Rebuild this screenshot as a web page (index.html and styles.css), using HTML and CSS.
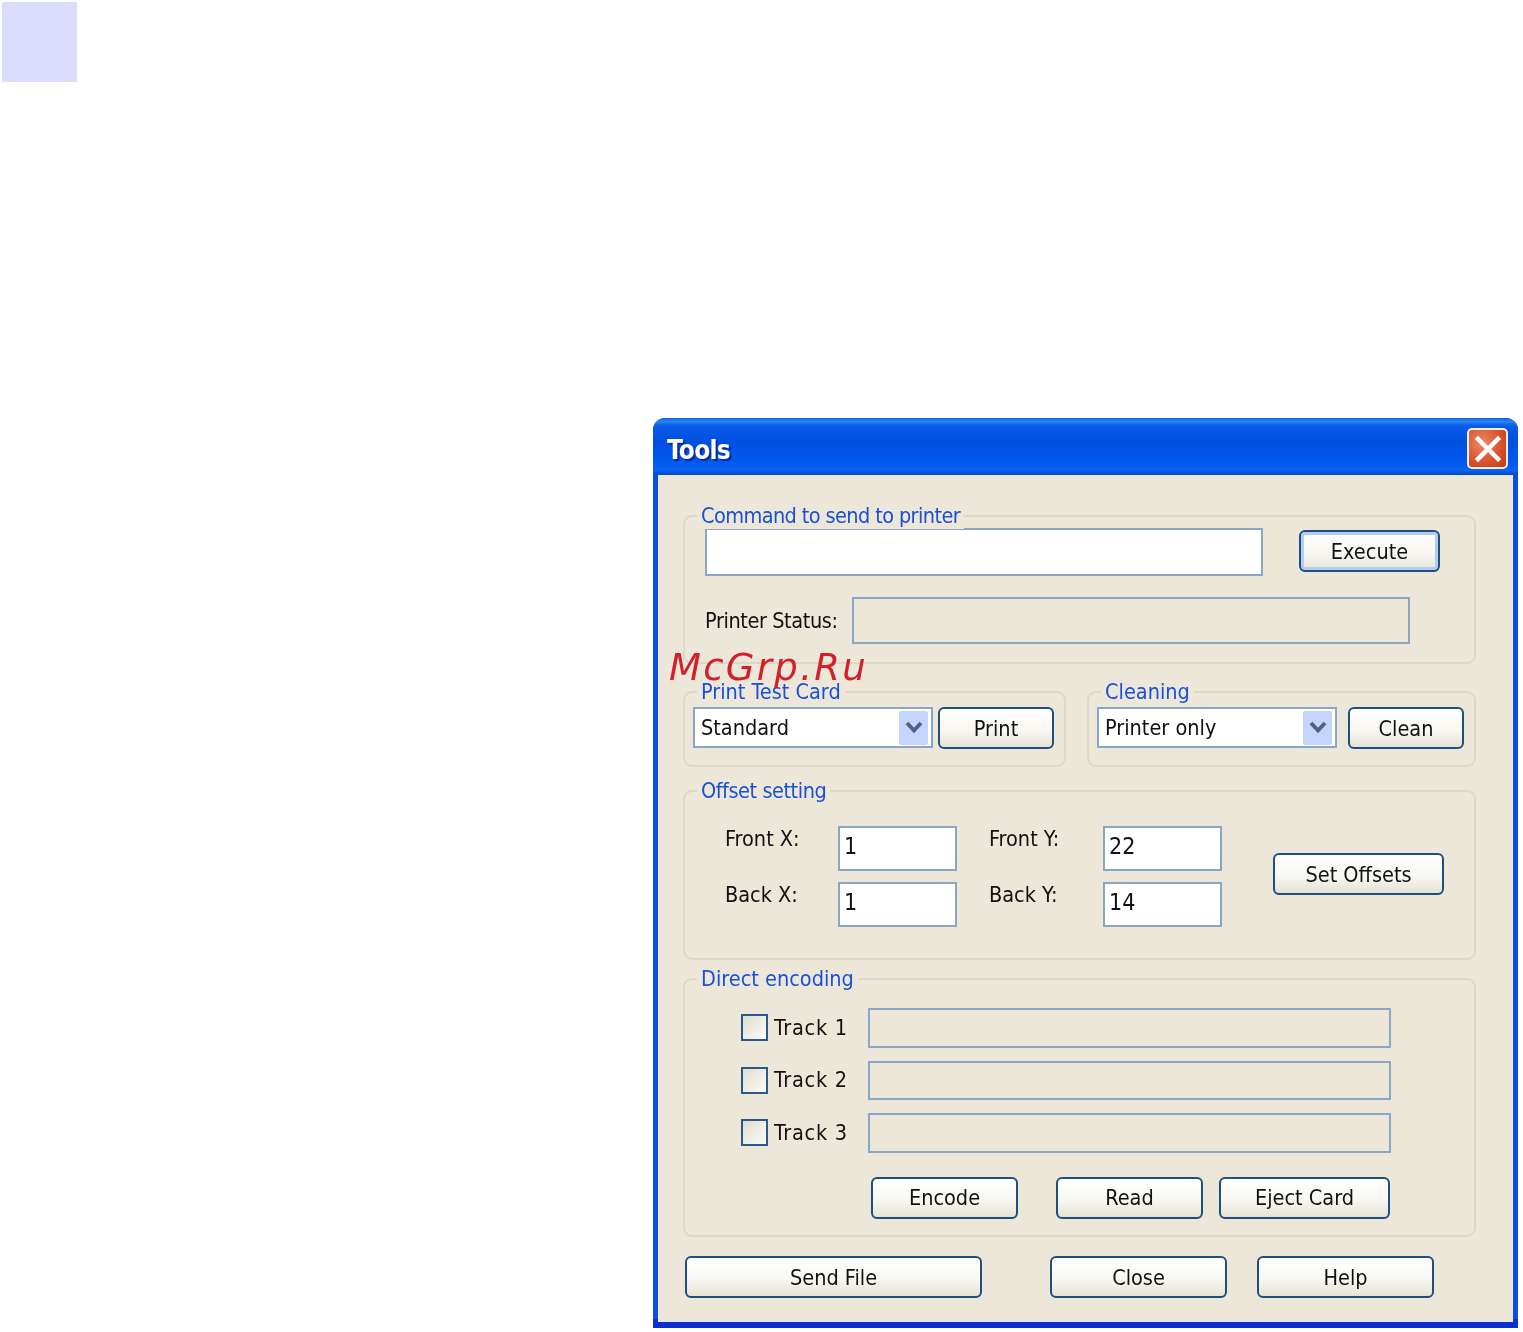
FILE: index.html
```html
<!DOCTYPE html>
<html lang="en">
<head>
<meta charset="utf-8">
<title>Tools</title>
<link rel="stylesheet" href="styles.css">
</head>
<body>
<div class="stamp"></div>
<div class="window">
  <div class="titlebar">
    <span class="title">Tools</span>
    <div class="close">
      <svg width="28" height="28" viewBox="0 0 28 28"><path d="M4 4 L24 24 M24 4 L4 24" stroke="#fff" stroke-width="4.5" stroke-linecap="square" fill="none"/></svg>
    </div>
  </div>
  <div class="client">
    <section class="group g-command">
      <div class="legend legend-tight">Command to send to printer</div>
      <div class="row-command">
        <div class="field field-white f-command"></div>
        <div class="btn btn-default b-execute">Execute</div>
      </div>
      <div class="row-status">
        <span class="lbl lbl-status">Printer Status:</span>
        <div class="field f-status"></div>
      </div>
    </section>

    <div class="pair">
      <section class="group g-test">
        <div class="legend">Print Test Card</div>
        <div class="combo-row">
          <div class="combo"><span>Standard</span><div class="drop"><svg width="18" height="13" viewBox="0 0 18 13"><path d="M2 2 L9 9.5 L16 2" stroke="#4d6185" stroke-width="3.8" fill="none"/></svg></div></div>
          <div class="btn b-print">Print</div>
        </div>
      </section>
      <section class="group g-clean">
        <div class="legend">Cleaning</div>
        <div class="combo-row wide-gap">
          <div class="combo"><span>Printer only</span><div class="drop"><svg width="18" height="13" viewBox="0 0 18 13"><path d="M2 2 L9 9.5 L16 2" stroke="#4d6185" stroke-width="3.8" fill="none"/></svg></div></div>
          <div class="btn b-print">Clean</div>
        </div>
      </section>
    </div>

    <section class="group g-offset">
      <div class="legend legend-offset">Offset setting</div>
      <div class="offset-grid">
        <span class="lbl">Front X:</span>
        <div class="field field-white val">1</div>
        <span class="lbl">Front Y:</span>
        <div class="field field-white val">22</div>
        <div class="btn b-offsets">Set Offsets</div>
        <span class="lbl">Back X:</span>
        <div class="field field-white val">1</div>
        <span class="lbl">Back Y:</span>
        <div class="field field-white val">14</div>
      </div>
    </section>

    <section class="group g-direct">
      <div class="legend">Direct encoding</div>
      <div class="tracks">
        <div class="track"><div class="check"></div><span class="lbl lbl-track">Track 1</span><div class="field f-track"></div></div>
        <div class="track"><div class="check"></div><span class="lbl lbl-track">Track 2</span><div class="field f-track"></div></div>
        <div class="track"><div class="check"></div><span class="lbl lbl-track">Track 3</span><div class="field f-track"></div></div>
      </div>
      <div class="encode-row">
        <div class="btn b-encode">Encode</div>
        <div class="btn b-read">Read</div>
        <div class="btn b-eject">Eject Card</div>
      </div>
    </section>

    <div class="bottom-row">
      <div class="btn b-send">Send File</div>
      <div class="btn b-close">Close</div>
      <div class="btn b-help">Help</div>
    </div>
  </div>
  <div class="watermark">McGrp.Ru</div>
</div>
</body>
</html>
```
FILE: styles.css
```css
* { box-sizing: border-box; }
html, body { margin: 0; padding: 0; background: #fff; }
body { position: relative; width: 1523px; height: 1332px; overflow: hidden; }

.stamp { width: 75px; height: 80px; margin: 2px 0 0 2px; background: #dcdcff; }

.window {
  position: absolute; left: 653px; top: 418px; width: 865px; height: 910px;
  display: flex; flex-direction: column;
  background: linear-gradient(#0a4fe0 99%, #0a30d0 99%); border-radius: 12px 12px 0 0;
  font-family: "DejaVu Sans Condensed", "DejaVu Sans", sans-serif;
  font-size: 21.5px; color: #111;
  filter: blur(0.45px);
}
.titlebar {
  height: 57px; flex: none; display: flex; align-items: center; justify-content: space-between;
  padding: 4px 10px 0 14px; border-radius: 12px 12px 0 0;
  background: linear-gradient(#0a5fe6 0%, #2a86f2 6%, #0a5be8 14%, #0050e0 40%, #0058ee 75%, #0a62f0 92%, #0048c8 100%);
}
.title { margin-top: 3px; font-size: 26px; font-weight: 700; letter-spacing: -0.7px; color: #fff; text-shadow: 2px 2px 1px #0a2a90; }
.close {
  width: 41px; height: 41px; display: flex; align-items: center; justify-content: center;
  border: 2px solid #f4ece8; border-radius: 5px;
  background: radial-gradient(circle at 35% 35%, #e88a68, #d8502a 60%, #c23a12);
}
.client {
  flex: 1; margin: 0 5px 6px; padding: 40px 37px 0 25px;
  background: #ece7d8;
}

.group { position: relative; border: 2px solid #dcd8c8; border-radius: 9px; }
.legend {
  position: absolute; left: 12px; top: -14px; padding: 0 4px; height: 26px; line-height: 26px;
  background: #ece7d8; color: #1a50d8; white-space: nowrap;
}
.legend-tight { letter-spacing: -0.6px; }
.legend-offset { letter-spacing: -0.45px; }
.lbl { line-height: 26px; white-space: nowrap; }

.field { border: 2px solid #8aa6c4; }
.field-white { background: #fff; }
.val { padding: 4px 0 0 4px; line-height: 28px; font-size: 23px; }

.btn {
  display: flex; align-items: center; justify-content: center; height: 42px;
  border: 2px solid #1f4f80; border-radius: 6px;
  background: linear-gradient(#fff 0%, #f8f7f2 55%, #e6e2d4 100%);
  white-space: nowrap;
}
.btn-default { box-shadow: inset 0 0 0 3px #b4ccf2; }

.g-command { height: 149px; padding: 11px 0 0 20px; }
.row-command { display: flex; align-items: flex-start; gap: 36px; }
.f-command { width: 558px; height: 48px; }
.b-execute { width: 141px; margin-top: 2px; }
.row-status { display: flex; align-items: center; margin-top: 21px; }
.lbl-status { width: 147px; letter-spacing: -0.4px; }
.f-status { width: 558px; height: 47px; }

.pair { display: flex; gap: 21px; margin-top: 27px; }
.g-test { width: 383px; height: 76px; padding: 14px 0 0 8px; }
.g-clean { width: 389px; height: 76px; padding: 14px 0 0 8px; }
.combo-row { display: flex; align-items: flex-start; gap: 5px; }
.wide-gap { gap: 11px; }
.combo {
  width: 240px; height: 41px; padding: 0 3px 0 6px; display: flex; align-items: center; justify-content: space-between;
  background: #fff; border: 2px solid #8aa6c4;
}
.drop {
  width: 29px; height: 34px; display: flex; align-items: center; justify-content: center;
  background: #c4d4fa; border-radius: 2px;
}
.b-print { width: 116px; }

.g-offset { height: 170px; margin-top: 23px; padding: 34px 0 0 40px; }
.offset-grid {
  display: grid; grid-template-columns: 113px 119px 32px 114px 119px 51px 171px;
  grid-template-rows: 45px 45px; row-gap: 11px;
}
.offset-grid > :nth-child(1) { grid-area: 1 / 1; }
.offset-grid > :nth-child(2) { grid-area: 1 / 2; }
.offset-grid > :nth-child(3) { grid-area: 1 / 4; }
.offset-grid > :nth-child(4) { grid-area: 1 / 5; }
.offset-grid > :nth-child(5) { grid-area: 1 / 7 / 3 / 8; align-self: start; margin-top: 27px; }
.offset-grid > :nth-child(6) { grid-area: 2 / 1; }
.offset-grid > :nth-child(7) { grid-area: 2 / 2; }
.offset-grid > :nth-child(8) { grid-area: 2 / 4; }
.offset-grid > :nth-child(9) { grid-area: 2 / 5; }

.g-direct { height: 259px; margin-top: 18px; padding: 28px 0 0 56px; }
.tracks { display: flex; flex-direction: column; gap: 13px; }
.track { display: flex; align-items: center; height: 39.5px; }
.check {
  width: 27px; height: 27px; margin-right: 6px; flex: none;
  border: 2px solid #2a5a8c; background: linear-gradient(135deg, #e0ddd0, #fbfbf8);
}
.lbl-track { width: 94px; letter-spacing: 0.7px; }
.f-track { width: 523px; height: 100%; }
.encode-row { display: flex; margin: 24px 0 0 130px; }
.b-encode { width: 147px; margin-right: 38px; }
.b-read { width: 147px; margin-right: 16px; }
.b-eject { width: 171px; }

.bottom-row { display: flex; margin: 19px 0 0 2px; }
.b-send { width: 297px; margin-right: 68px; }
.b-close { width: 177px; margin-right: 30px; }
.b-help { width: 177px; }

.watermark {
  position: absolute; left: 16px; top: 228px;
  font-family: "DejaVu Sans", sans-serif; font-style: italic;
  font-size: 37px; line-height: 44px; letter-spacing: 2.3px; color: #d2202a; white-space: nowrap;
}
```
